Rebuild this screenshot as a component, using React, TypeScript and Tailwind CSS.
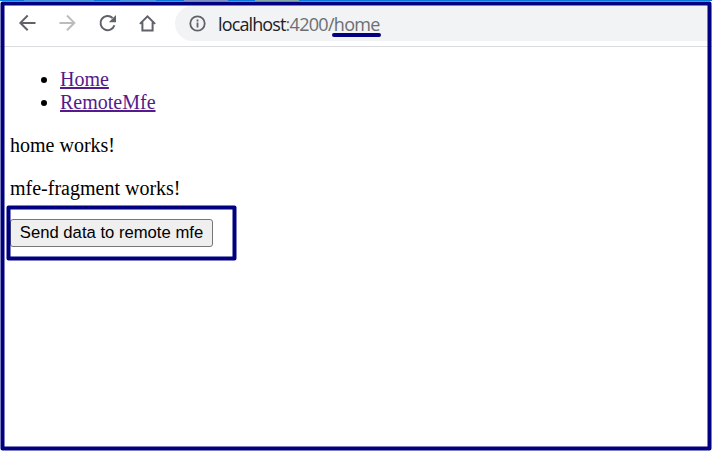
const Toolbar = () => (
  <header className="flex h-[47px] items-start border-b border-[#dadce0] pl-[18px] pt-[6px]">
    <nav className="flex h-[35px] items-center gap-[20px] text-[#5f6368]">
      <svg width="20" height="20" viewBox="0 0.4 20 20" fill="none" stroke="currentColor" strokeWidth="2">
        <path d="M17.5 9.3H3M9.7 1.9L2.4 9.3l7.3 7.4" />
      </svg>
      <svg width="20" height="20" viewBox="0 0.4 20 20" fill="none" stroke="#babcbe" strokeWidth="2">
        <path d="M1.5 9.3H16M9 1.9l7.3 7.4L9 16.7" />
      </svg>
      <svg width="20" height="20" viewBox="0 0.3 20 20" fill="none" stroke="currentColor" strokeWidth="2">
        <path d="M16.4 11.5A7.1 7.1 0 1 1 14.6 4.3" />
        <path d="M18 1.3v7.2h-7.2z" fill="currentColor" stroke="none" />
      </svg>
      <svg width="20" height="20" viewBox="0 0.3 20 20" fill="none" stroke="currentColor" strokeWidth="2">
        <path d="M1.9 10.2L9.5 2.6l7.6 7.6M4.4 8.5v8.2h10.2V8.5" />
      </svg>
    </nav>
    <div className="relative ml-[17px] flex h-[35px] flex-1 items-center rounded-l-full bg-[#f1f3f4] pl-[14px]">
      <svg width="17" height="17" viewBox="0 0 17 17" fill="none" stroke="#5f6368" strokeWidth="1.8">
        <circle cx="8.5" cy="8.5" r="7.2" />
        <path d="M8.5 7.6v4.9M8.5 4.5v1.9" />
      </svg>
      <span className="ml-[12px] whitespace-nowrap font-['Open_Sans','Noto_Sans',sans-serif] text-[18px] leading-[24px] tracking-[-0.71px] text-[#6b6f73]">
        <span className="tracking-[-0.87px] text-[#202124]">localhost</span>:4200/home
      </span>
      <span className="absolute left-[156.5px] top-[26.5px] h-[4px] w-[49.5px] rounded-full bg-[#000080]" />
    </div>
  </header>
);

export default function App() {
  return (
    <div className="relative h-[452px] w-[712px] overflow-hidden bg-white">
      <div className="flex h-px">
        <i className="w-[24px] bg-[#0a78d7]" />
        <i className="w-[70px] bg-[#4095dc]" />
        <i className="w-[26px] bg-[#0a78d7]" />
        <i className="w-[36px] bg-[#4095dc]" />
        <i className="w-[28px] bg-[#0a78d7]" />
        <i className="w-[44px] bg-[#7b8fc0]" />
        <i className="w-[27px] bg-[#0a78d7]" />
        <i className="w-[44px] bg-[#7fa9a8]" />
        <i className="flex-1 bg-[#0a78d7]" />
      </div>
      <div className="-mt-px">
        <Toolbar />
      </div>
      <main className="px-[10px] pt-[21px] font-['Liberation_Serif',serif] text-[20px] leading-[23px] text-black">
        <ul className="list-disc pl-[50px]">
          <li><a href="#home" className="text-[#551a8b] underline">Home</a></li>
          <li><a href="#remote" className="text-[#551a8b] underline">RemoteMfe</a></li>
        </ul>
        <p className="mt-[20px]">home works!</p>
        <p className="mt-[20px]">mfe-fragment works!</p>
        <button className="mt-[19px] flex h-[28px] w-[203px] items-center justify-center whitespace-nowrap rounded-[3px] border border-[#767676] bg-[#efefef] pb-[2px] font-['Liberation_Sans',sans-serif] text-[16.67px] leading-[19px]">
          Send data to remote mfe
        </button>
      </main>
      <svg className="pointer-events-none absolute inset-0" width="712" height="452" fill="none" stroke="#000080" strokeWidth="4" strokeLinejoin="round">
        <rect x="2.5" y="3.5" width="707" height="445" />
        <rect x="8.5" y="207.5" width="226" height="51" />
      </svg>
    </div>
  );
}
